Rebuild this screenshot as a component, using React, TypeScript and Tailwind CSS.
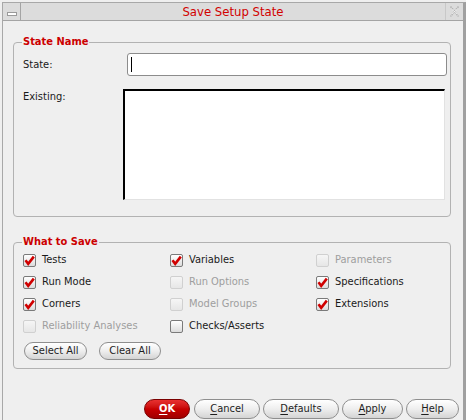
import React from "react";

const font = {
  fontFamily: '"DejaVu Sans Condensed", "DejaVu Sans", sans-serif',
  fontStretch: "condensed" as const,
};

function Check() {
  return (
    <svg width="11" height="11" viewBox="0 0 11 11" className="block">
      <path d="M1.5 5.2 L4.2 8.8 L9.8 1.6" fill="none" stroke="#d00000" strokeWidth="2.6" strokeLinejoin="miter" />
    </svg>
  );
}

function Box({ checked, disabled, label }: { checked?: boolean; disabled?: boolean; label: string }) {
  return (
    <div className="flex items-center gap-[6px] h-[22px]">
      <div
        className={
          disabled
            ? "w-[13px] h-[13px] rounded-[2px] border border-[#d0d0d0] bg-gradient-to-b from-[#f6f6f6] to-[#e6e6e6]"
            : "w-[13px] h-[13px] rounded-[2px] border border-[#7a7a7a] bg-gradient-to-b from-white to-[#dcdcdc] flex items-center justify-center"
        }
      >
        {checked ? <Check /> : null}
      </div>
      <span className={disabled ? "text-[11px] leading-[14px] text-[#9e9e9e]" : "text-[11px] leading-[14px] text-[#1a1a1a]"}>
        {label}
      </span>
    </div>
  );
}

function Btn({ w, children, ml }: { w: string; children: React.ReactNode; ml?: string }) {
  return (
    <div
      className={`${w} ${ml ?? ""} h-[20px] rounded-full border border-[#8e8e8e] bg-gradient-to-b from-white via-[#eeeeee] to-[#d4d4d4] flex items-center justify-center text-[11px] leading-[14px] text-[#1e1e1e]`}
    >
      {children}
    </div>
  );
}

export default function App() {
  return (
    <div className="w-[466px] h-[420px] overflow-hidden bg-[#efefef] pt-[2px] pl-[2px]" style={font}>
      <div className="h-[430px] border-l border-t border-[#a8a8a8] border-r-[3px] border-r-[#a0a0a0] flex flex-col">
        {/* title bar */}
        <div className="h-[18px] flex bg-[#dcdcdc] border-b border-[#a4a4a4] shrink-0">
          <div className="w-[18px] border-r border-[#a4a4a4] flex items-end justify-center pb-[4px]">
            <div className="w-[10px] h-[4px] border border-[#9a9a9a] bg-white" />
          </div>
          <div className="flex-1 flex items-center justify-center text-[13px] leading-[16px] text-[#d20000]">
            Save Setup State
          </div>
          <div className="w-[18px] border-l border-[#c8c8c8] flex items-center justify-center">
            <svg width="11" height="13" viewBox="0 0 11 13">
              <path d="M1.5 1.5 L9.5 11.5 M9.5 1.5 L1.5 11.5" stroke="#b4b4b4" strokeWidth="1.6" strokeDasharray="1.6 0.8" fill="none" />
              <path d="M2.5 4 L8.5 9 M8.5 4 L2.5 9" stroke="#f4f4f4" strokeWidth="0.8" fill="none" />
            </svg>
          </div>
        </div>

        {/* body */}
        <div className="pl-[10px] pr-[12px] pt-[14px]">
          <fieldset className="border border-[#b2b2b2] rounded-[4px] pl-[9px] pr-[3px] pb-[16px]">
            <legend className="ml-[-1px] px-[1px] text-[11px] leading-[14px] font-bold text-[#cc0000]">State Name</legend>
            <div className="flex items-center mt-[4px] h-[23px]">
              <div className="w-[104px] text-[11px] leading-[14px] text-[#1a1a1a]">State:</div>
              <div className="w-[320px] h-[23px] border border-[#8c8c8c] rounded-[3px] bg-white flex items-center">
                <div className="ml-[3px] w-[1px] h-[15px] bg-black" />
              </div>
            </div>
            <div className="flex mt-[13px]">
              <div className="w-[100px] pt-[1px] text-[11px] leading-[14px] text-[#1a1a1a]">Existing:</div>
              <div className="w-[322px] h-[111px] bg-white border-t-2 border-l-2 border-t-black border-l-black border-r border-b border-r-[#e2e2e2] border-b-[#e2e2e2]" />
            </div>
          </fieldset>

          <fieldset className="mt-[18px] border border-[#b2b2b2] rounded-[4px] pl-[9px] pr-[3px] pb-[8px]">
            <legend className="ml-[-1px] px-[1px] text-[11px] leading-[14px] font-bold text-[#cc0000]">What to Save</legend>
            <div className="grid grid-cols-[147px_146px_1fr]">
              <Box checked label="Tests" />
              <Box checked label="Variables" />
              <Box disabled label="Parameters" />
              <Box checked label="Run Mode" />
              <Box disabled label="Run Options" />
              <Box checked label="Specifications" />
              <Box checked label="Corners" />
              <Box disabled label="Model Groups" />
              <Box checked label="Extensions" />
              <Box disabled label="Reliability Analyses" />
              <Box label="Checks/Asserts" />
              <div />
            </div>
            <div className="flex mt-[5px] ml-[1px] gap-[12px]">
              <div className="w-[63px] h-[18px] rounded-full border border-[#8e8e8e] bg-gradient-to-b from-white via-[#eeeeee] to-[#d4d4d4] flex items-center justify-center text-[11px] leading-[14px] text-[#1e1e1e]">
                Select All
              </div>
              <div className="w-[62px] h-[18px] rounded-full border border-[#8e8e8e] bg-gradient-to-b from-white via-[#eeeeee] to-[#d4d4d4] flex items-center justify-center text-[11px] leading-[14px] text-[#1e1e1e]">
                Clear All
              </div>
            </div>
          </fieldset>

          <div className="flex justify-end mt-[30px] mr-[-8px]">
            <div className="w-[46px] h-[20px] rounded-full border border-[#7a0000] bg-gradient-to-b from-[#e83030] via-[#c80000] to-[#a00000] flex items-center justify-center text-[11px] leading-[14px] font-bold text-white">
              <span className="underline underline-offset-2">O</span>K
            </div>
            <Btn w="w-[66px]" ml="ml-[4px]">
              <span className="underline underline-offset-2">C</span>ancel
            </Btn>
            <Btn w="w-[76px]" ml="ml-[3px]">
              <span className="underline underline-offset-2">D</span>efaults
            </Btn>
            <Btn w="w-[61px]" ml="ml-[3px]">
              <span className="underline underline-offset-2">A</span>pply
            </Btn>
            <Btn w="w-[53px]" ml="ml-[3px]">
              <span className="underline underline-offset-2">H</span>elp
            </Btn>
          </div>
        </div>
      </div>
    </div>
  );
}
